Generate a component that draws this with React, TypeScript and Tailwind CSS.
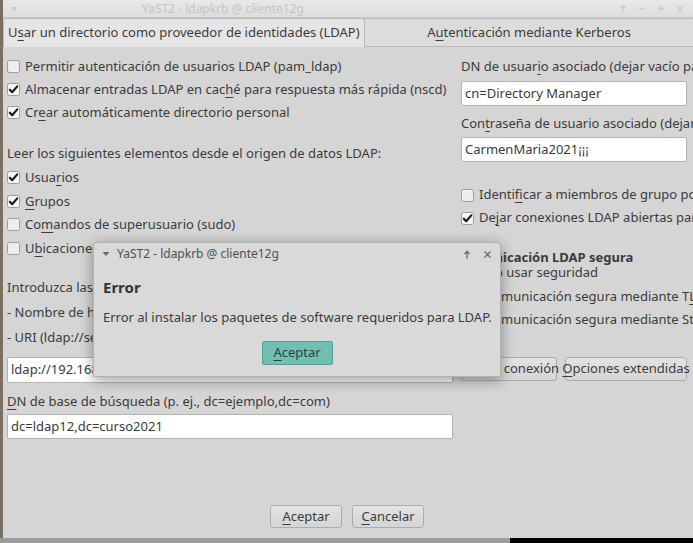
import React from 'react';

const U = ({ children }: { children: React.ReactNode }) => (
  <span className="underline decoration-1 underline-offset-[3px]">{children}</span>
);

function Box({ checked }: { checked?: boolean }) {
  return (
    <svg width="13" height="13" viewBox="0 0 13 13" className="shrink-0">
      <rect x="0.5" y="0.5" width="12" height="12" rx="2" fill={checked ? '#f6f6f6' : '#eeeeee'} stroke="#9d9d9d" />
      {checked && (
        <path d="M2.8 6.7 L5.2 9.2 L10.2 3.4" fill="none" stroke="#1c1c1c" strokeWidth="2.2" strokeLinecap="round" strokeLinejoin="round" />
      )}
    </svg>
  );
}

function Radio() {
  return (
    <svg width="13" height="13" viewBox="0 0 13 13" className="shrink-0">
      <circle cx="6.5" cy="6.5" r="6" fill="#eeeeee" stroke="#9d9d9d" />
    </svg>
  );
}

interface RowProps {
  checked?: boolean;
  radio?: boolean;
  className?: string;
  children: React.ReactNode;
}

function CheckRow({ checked, radio, className, children }: RowProps) {
  return (
    <div className={'flex items-center gap-[5px] whitespace-nowrap ' + (className ?? '')}>
      {radio ? <Radio /> : <Box checked={checked} />}
      <span>{children}</span>
    </div>
  );
}

function Field({ value, className }: { value: string; className?: string }) {
  return (
    <div className={'flex items-center bg-white border border-[#b4b4b4] rounded-[2px] pl-[3px] whitespace-nowrap overflow-hidden ' + (className ?? '')}>
      {value}
    </div>
  );
}

function Btn({ children, className }: { children: React.ReactNode; className?: string }) {
  return (
    <button className={'flex items-center justify-center whitespace-nowrap bg-gradient-to-b from-[#e3e3e3] to-[#d5d5d5] border border-[#acacac] rounded-[3px] text-[#3b3b3b] ' + (className ?? '')}>
      {children}
    </button>
  );
}

export default function App() {
  return (
    <div className="relative w-[693px] h-[543px] overflow-hidden flex flex-col bg-[#999999] font-['Noto_Sans',sans-serif] text-[13px] text-[#3b3b3b]">
      <div className="flex h-[538px]">
        <div className="w-[3px] bg-[#7c6f62]" />
        <div className="flex-1 flex flex-col bg-[#d5d5d5] overflow-hidden">
          {/* title bar */}
          <div className="h-[18px] flex items-center bg-gradient-to-b from-[#e9e9e9] to-[#dddddd] border-b border-[#c9c9c9] text-[#c4c4c4]">
            <svg width="8" height="6" viewBox="0 0 8 6" className="ml-[7px] shrink-0">
              <path d="M0.5 1 L7.5 1 L4 5 Z" fill="#c9c9c9" />
            </svg>
            <span className="ml-[124px] text-[12px] whitespace-nowrap">YaST2 - ldapkrb @ cliente12g</span>
            <div className="ml-auto mr-[9px] flex items-center gap-[11px]">
              <svg width="8" height="9" viewBox="0 0 8 9">
                <path d="M4 8.5 V1.5 M1.5 4 L4 1.2 L6.5 4" fill="none" stroke="#cbcbcb" strokeWidth="1.4" />
              </svg>
              <svg width="8" height="9" viewBox="0 0 8 9">
                <path d="M1 4.5 H7" stroke="#cbcbcb" strokeWidth="1.4" />
              </svg>
              <svg width="8" height="9" viewBox="0 0 8 9">
                <path d="M1 4.5 H7 M4 1.5 V7.5" stroke="#cbcbcb" strokeWidth="1.4" />
              </svg>
              <svg width="8" height="9" viewBox="0 0 8 9">
                <path d="M1.2 1.7 L6.8 7.3 M6.8 1.7 L1.2 7.3" stroke="#cbcbcb" strokeWidth="1.4" />
              </svg>
            </div>
          </div>

          {/* tabs */}
          <div className="h-[29px] flex">
            <div className="w-[362px] flex items-center pl-[4px] bg-[#e5e5e5] border border-b-0 border-[#b9b9b9] rounded-t-[3px] whitespace-nowrap">
              <span>
                U<U>s</U>ar un directorio como proveedor de identidades (LDAP)
              </span>
            </div>
            <div className="flex-1 flex items-center justify-center bg-[#dcdcdc] border-t border-b border-[#b9b9b9] whitespace-nowrap">
              <span>
                A<U>u</U>tenticación mediante Kerberos
              </span>
            </div>
          </div>

          {/* body */}
          <div className="flex pl-[4px] pt-[8px]">
            <div className="w-[446px] flex flex-col">
              <CheckRow className="h-[23px]">Permitir autenticación de usuarios LDAP (pam_ldap)</CheckRow>
              <CheckRow checked className="h-[23px]">
                Almacenar entradas LDAP en cac<U>h</U>é para respuesta más rápida (nscd)
              </CheckRow>
              <CheckRow checked className="h-[23px]">
                Cr<U>e</U>ar automáticamente directorio personal
              </CheckRow>
              <div className="mt-[18px] h-[24px] flex items-center whitespace-nowrap">
                Leer los siguientes elementos desde el origen de datos LDAP:
              </div>
              <CheckRow checked className="h-[23.5px]">
                Usua<U>r</U>ios
              </CheckRow>
              <CheckRow checked className="h-[23.5px]">
                <U>G</U>rupos
              </CheckRow>
              <CheckRow className="h-[23.5px]">
                Co<U>m</U>andos de superusuario (sudo)
              </CheckRow>
              <CheckRow className="h-[23.5px]">
                U<U>b</U>icaciones de montaje automático (automount)
              </CheckRow>
              <div className="mt-[15.5px] h-[25px] flex items-center whitespace-nowrap">
                Introduzca las direcciones del servidor LDAP:
              </div>
              <div className="h-[25px] flex items-center whitespace-nowrap">- Nombre de host o dirección IP</div>
              <div className="h-[25px] flex items-center whitespace-nowrap">- URI (ldap://servidor:puerto)</div>
              <Field value="ldap://192.168.100.12" className="mt-[6.5px] h-[26px]" />
              <div className="mt-[6.5px] h-[24px] flex items-center whitespace-nowrap">
                <span>
                  <U>D</U>N de base de búsqueda (p. ej., dc=ejemplo,dc=com)
                </span>
              </div>
              <Field value="dc=ldap12,dc=curso2021" className="mt-[0.5px] h-[25px]" />
            </div>

            <div className="ml-[8px] w-[226px] shrink-0 flex flex-col">
              <div className="h-[23px] flex items-center whitespace-nowrap">
                <span>
                  DN de usuar<U>i</U>o asociado (dejar vacío para enlace anónimo)
                </span>
              </div>
              <Field value="cn=Directory Manager" className="mt-[3px] h-[25px]" />
              <div className="mt-[6.5px] h-[23px] flex items-center whitespace-nowrap">
                <span>
                  Con<U>t</U>raseña de usuario asociado (dejar vacía para enlace anónimo)
                </span>
              </div>
              <Field value="CarmenMaria2021¡¡¡" className="mt-[1.5px] h-[25px]" />
              <CheckRow className="mt-[21.5px] h-[23px]">
                Identi<U>f</U>icar a miembros de grupo por su nombre distintivo (DN)
              </CheckRow>
              <CheckRow checked className="h-[23px]">
                De<U>j</U>ar conexiones LDAP abiertas para las consultas de usuario
              </CheckRow>
              <div className="mt-[20.5px] -ml-[4px] h-[16px] flex items-center font-bold whitespace-nowrap">
                Comunicación LDAP segura
              </div>
              <CheckRow radio className="pl-[6px] h-[13px]">
                No usar seguridad
              </CheckRow>
              <CheckRow radio className="pl-[6px] mt-[6px] h-[23px]">
                Comunicación segura mediante T<U>L</U>S/SSL
              </CheckRow>
              <CheckRow radio className="pl-[6px] h-[23px]">
                Comunicación segura mediante StartTLS
              </CheckRow>
              <div className="mt-[26px] h-[24px] flex gap-[8px]">
                <Btn className="w-[96px] h-[24px]">Probar conexión</Btn>
                <Btn className="w-[122px] h-[24px]">
                  <span>
                    <U>O</U>pciones extendidas
                  </span>
                </Btn>
              </div>
            </div>
          </div>

          {/* bottom buttons */}
          <div className="mt-auto pb-[10px] pl-[267px] flex gap-[10px]">
            <Btn className="w-[72px] h-[23px]">
              <span>
                <U>A</U>ceptar
              </span>
            </Btn>
            <Btn className="w-[72px] h-[23px]">
              <span>
                <U>C</U>ancelar
              </span>
            </Btn>
          </div>
        </div>
      </div>
      <div className="flex h-[5px]">
        <div className="w-[510px] bg-[#9c9c9c]" />
        <div className="flex-1 bg-black" />
      </div>

      {/* error dialog */}
      <div className="absolute left-[93px] top-[242px] w-[408px] h-[135px] flex flex-col bg-[#d9d9d9] border border-[#b2b2b2] rounded-t-[4px] shadow-[0_3px_14px_rgba(0,0,0,0.4)]">
        <div className="h-[22px] flex items-center text-[#505050]">
          <svg width="8" height="6" viewBox="0 0 8 6" className="ml-[8px] shrink-0">
            <path d="M0.5 1 L7.5 1 L4 5 Z" fill="#6a6a6a" />
          </svg>
          <span className="ml-[7px] text-[12px] whitespace-nowrap">YaST2 - ldapkrb @ cliente12g</span>
          <div className="ml-auto mr-[8px] flex items-center gap-[12px]">
            <svg width="8" height="9" viewBox="0 0 8 9">
              <path d="M4 8.5 V1.5 M1.5 4 L4 1.2 L6.5 4" fill="none" stroke="#707070" strokeWidth="1.4" />
            </svg>
            <svg width="9" height="9" viewBox="0 0 9 9">
              <path d="M1.5 1.5 L7.5 7.5 M7.5 1.5 L1.5 7.5" stroke="#707070" strokeWidth="1.4" />
            </svg>
          </div>
        </div>
        <div className="mt-[12px] h-[20px] pl-[9px] flex items-center text-[15px] font-bold text-[#333333]">Error</div>
        <div className="mt-[11px] h-[20px] pl-[9px] flex items-center whitespace-nowrap">
          Error al instalar los paquetes de software requeridos para LDAP.
        </div>
        <div className="mt-[13px] flex justify-center">
          <button className="w-[71px] h-[24px] flex items-center justify-center bg-[#6fc0b2] border border-[#56a092] rounded-[2px] text-[#2f3f3c]">
            <span>
              <U>A</U>ceptar
            </span>
          </button>
        </div>
      </div>
    </div>
  );
}
